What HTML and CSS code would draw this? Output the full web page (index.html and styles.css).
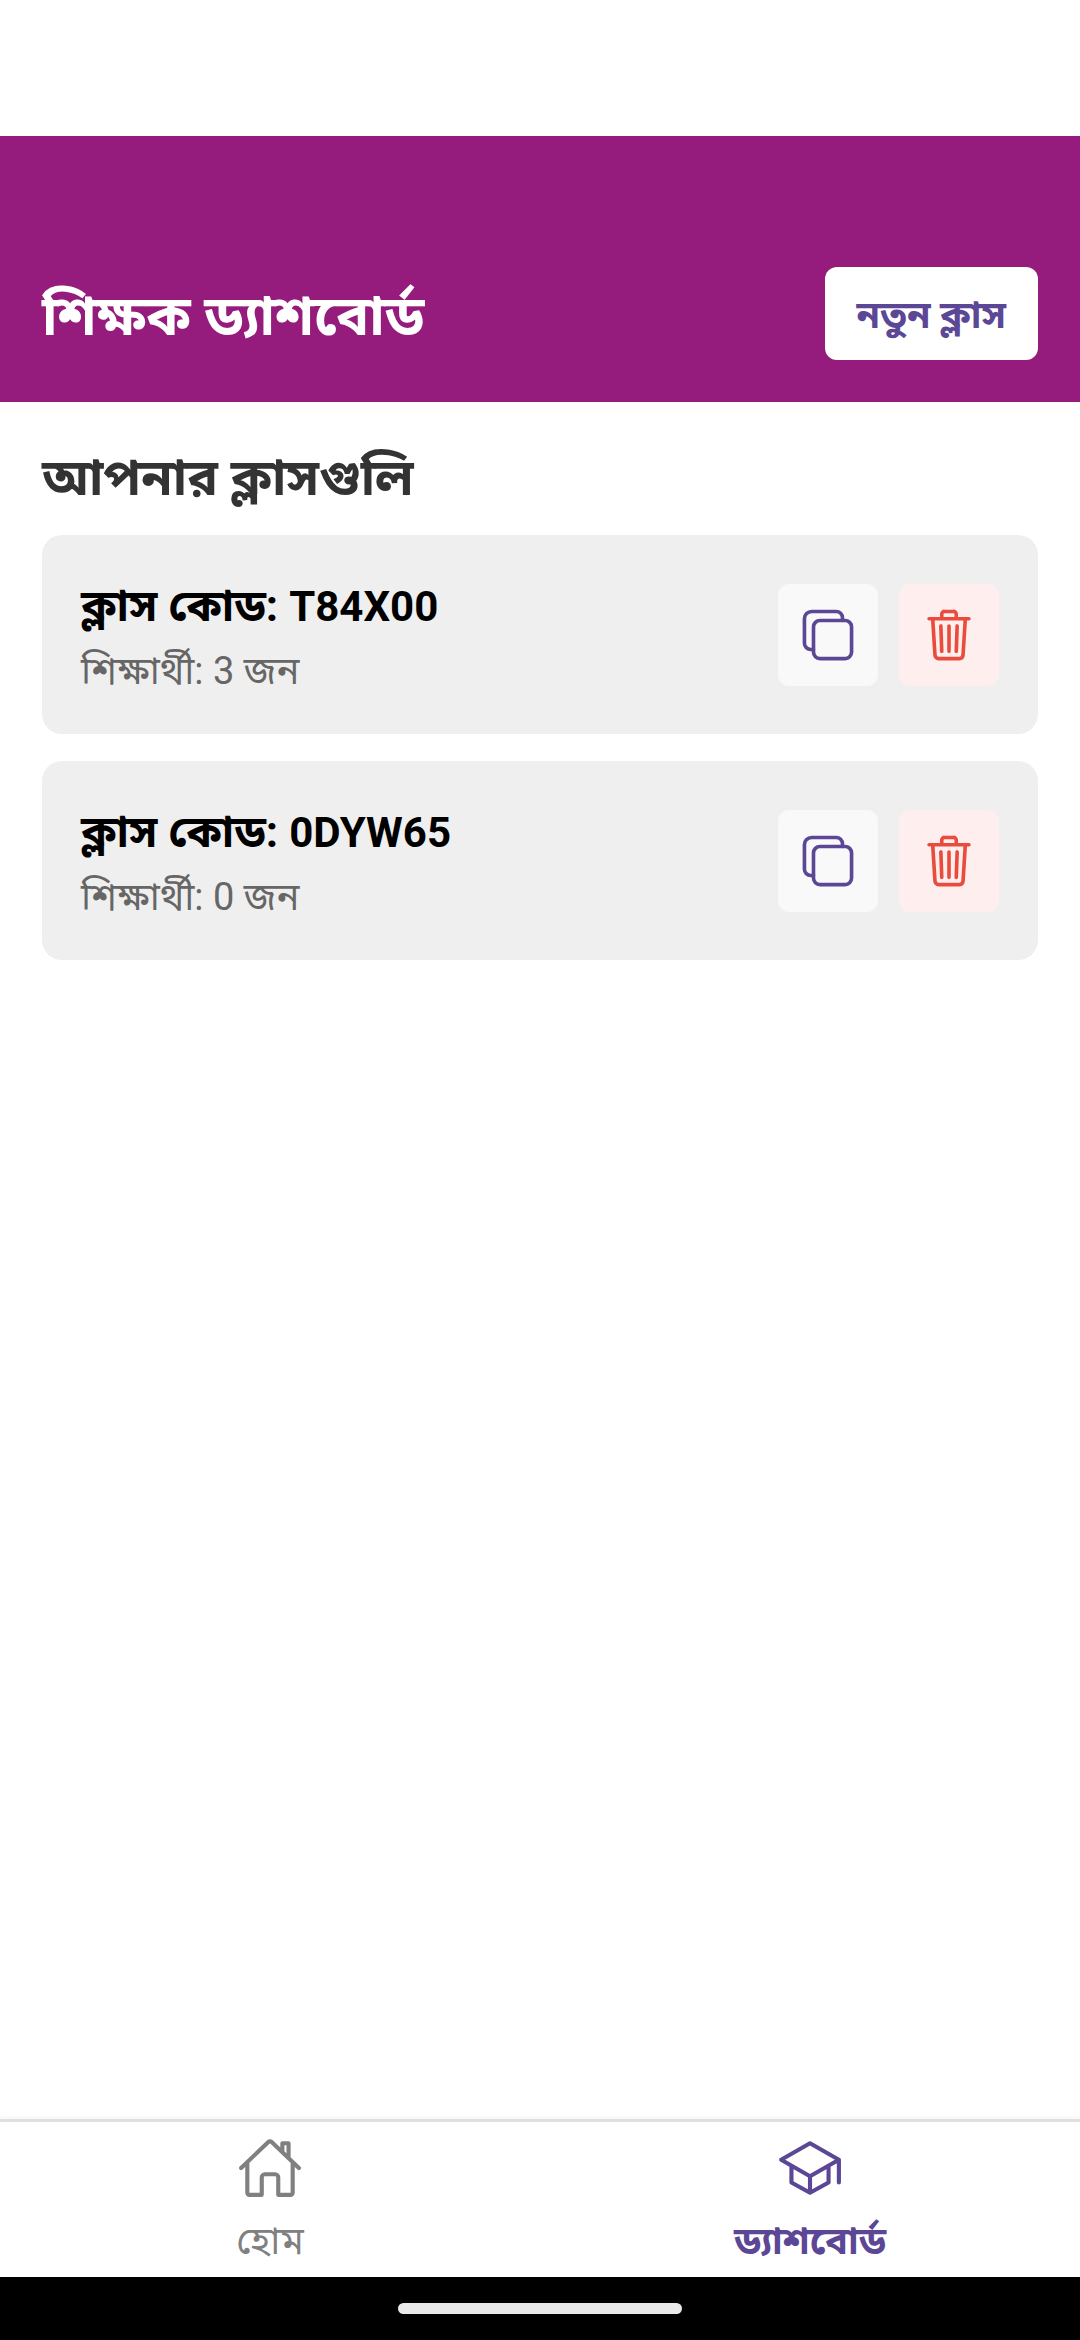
FILE: index.html
```html
<!DOCTYPE html>
<html lang="bn">
<head>
<meta charset="utf-8">
<meta name="viewport" content="width=device-width, initial-scale=1">
<title>শিক্ষক ড্যাশবোর্ড</title>
<link rel="stylesheet" href="styles.css">
</head>
<body>
<svg class="sprite" aria-hidden="true">
  <symbol id="copy" viewBox="0 0 512 512"><g fill="none" stroke="currentColor" stroke-width="32" stroke-linejoin="round" stroke-linecap="round"><rect x="128" y="128" width="336" height="336" rx="57" ry="57"/><path d="M383.5 128l.5-24a56.160 56.160 0 00-56-56H112a64.190 64.190 0 00-64 64v216a56.160 56.160 0 0056 56h24"/></g></symbol>
  <symbol id="trash" viewBox="0 0 512 512"><g fill="none" stroke="currentColor" stroke-width="32" stroke-linejoin="round" stroke-linecap="round"><path d="M112 112l20 320c.95 18.490 14.400 32 32 32h184c17.670 0 30.870-13.510 32-32l20-320M80 112h352M192 112V72h0a23.930 23.930 0 0124-24h80a23.930 23.930 0 0124 24h0v40M256 176v224M184 176l8 224M328 176l-8 224"/></g></symbol>
  <symbol id="home" viewBox="0 0 512 512"><g fill="none" stroke="currentColor" stroke-width="32" stroke-linejoin="round" stroke-linecap="round"><path d="M80 212v236a16 16 0 0016 16h96V328a24 24 0 0124-24h80a24 24 0 0124 24v136h96a16 16 0 0016-16V212M480 256L266.890 52c-5-5.280-16.690-5.340-21.780 0L32 256M400 179V64h-48v69"/></g></symbol>
  <symbol id="school" viewBox="0 0 512 512"><g fill="none" stroke="currentColor" stroke-width="32" stroke-linejoin="round" stroke-linecap="round"><path d="M32 192L256 64l224 128-224 128L32 192zM112 240v128l144 80 144-80V240M480 368V192M256 320v128"/></g></symbol>
</svg>
<div class="app">
  <header class="header">
    <h1 class="title">শিক্ষক ড্যাশবোর্ড</h1>
    <button class="new-class" type="button">নতুন ক্লাস</button>
  </header>
  <main class="content">
    <h2 class="heading">আপনার ক্লাসগুলি</h2>
    <ul class="classes">
      <li class="card">
        <div class="info"><p class="code">ক্লাস কোড: <span class="code-value">T84X00</span></p><p class="count">শিক্ষার্থী: 3 জন</p></div>
        <button class="action copy" type="button" aria-label="কপি"><svg class="icon"><use href="#copy"/></svg></button>
        <button class="action delete" type="button" aria-label="মুছুন"><svg class="icon"><use href="#trash"/></svg></button>
      </li>
      <li class="card">
        <div class="info"><p class="code">ক্লাস কোড: <span class="code-value">0DYW65</span></p><p class="count">শিক্ষার্থী: 0 জন</p></div>
        <button class="action copy" type="button" aria-label="কপি"><svg class="icon"><use href="#copy"/></svg></button>
        <button class="action delete" type="button" aria-label="মুছুন"><svg class="icon"><use href="#trash"/></svg></button>
      </li>
    </ul>
  </main>
  <nav class="tabs">
    <a class="tab" href="#home-page"><svg class="tab-icon"><use href="#home"/></svg><span>হোম</span></a>
    <a class="tab active" href="#dashboard" aria-current="page"><svg class="tab-icon"><use href="#school"/></svg><span>ড্যাশবোর্ড</span></a>
  </nav>
  <div class="system-bar"><div class="handle"></div></div>
</div>
</body>
</html>
```
FILE: styles.css
```css
* { box-sizing: border-box; margin: 0; padding: 0; }
body { font-family: Roboto, "Noto Sans Bengali", "Noto Sans", sans-serif; background: #fff; color: #000; }
.sprite { display: none; }
.app { min-height: 100vh; display: flex; flex-direction: column; padding-top: 136px; }
.header { display: flex; align-items: center; justify-content: space-between; background: #951b7c; padding: 131px 42px 42px; }
.title { color: #fff; font-size: 55px; line-height: 72px; font-weight: 700; padding-top: 4px; }
.new-class { font: inherit; font-size: 38px; line-height: 50px; font-weight: 700; color: #5b4796; background: #fff; border: 0; border-radius: 12px; padding: 23px 32px 20px; }
.content { flex: 1; padding: 44px 42px; }
.heading { color: #333; font-size: 51px; line-height: 64px; font-weight: 700; margin-bottom: 25px; }
.classes { list-style: none; display: grid; gap: 27px; }
.card { display: flex; align-items: center; gap: 21px; background: #efefef; border-radius: 20px; padding: 35px 39px 34px; }
.info { flex: 1; }
.code { font-size: 44px; line-height: 72px; font-weight: 700; }
.code-value { font-size: 42px; line-height: 1; }
.count { font-size: 38px; line-height: 58px; color: #666; }
.action { width: 100px; height: 102px; display: grid; place-items: center; border: 0; border-radius: 11px; }
.copy { background: #f9f9f9; color: #5b4796; }
.delete { background: #ffeeee; color: #e94c3d; }
.icon { width: 58px; height: 58px; }
.tabs { display: grid; grid-template-columns: 1fr 1fr; border-top: 3px solid #e0e0e0; box-shadow: 0 -1px 4px rgba(0, 0, 0, 0.06); }
.tab { display: flex; flex-direction: column; align-items: center; gap: 15px; padding: 13px 0 11px; color: #808080; font-size: 38px; line-height: 50px; text-decoration: none; }
.active { color: #5b4796; font-weight: 700; }
.tab-icon { width: 66px; height: 66px; }
.system-bar { display: grid; place-items: center; height: 63px; background: #000; }
.handle { width: 284px; height: 11px; border-radius: 6px; background: #e9e9e9; }
```
